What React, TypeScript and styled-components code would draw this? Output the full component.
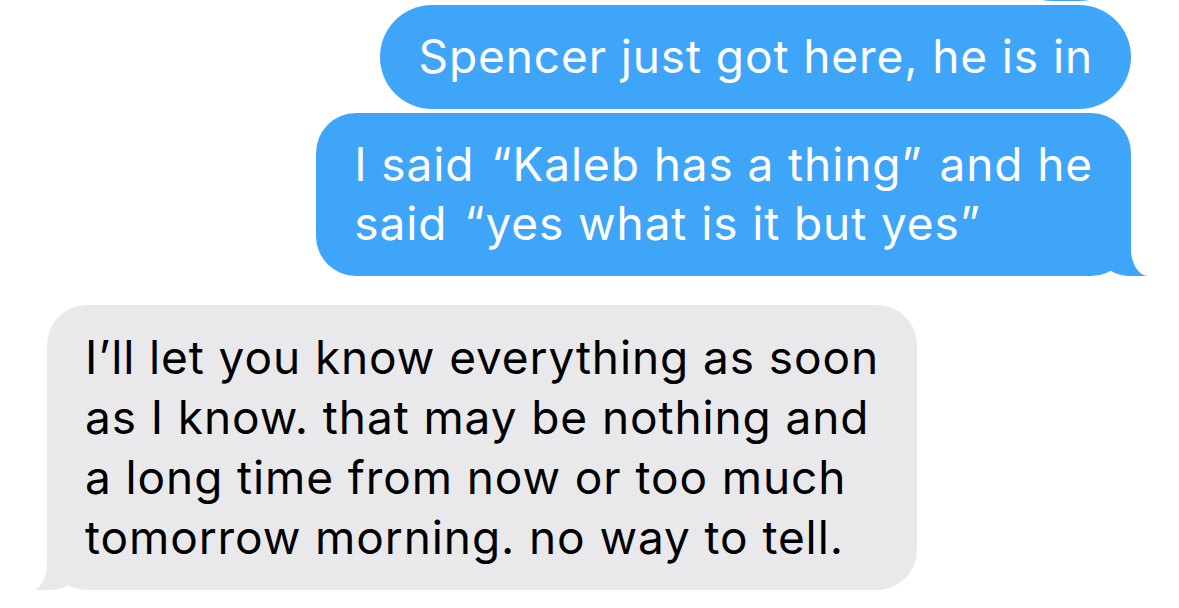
import styled, { createGlobalStyle } from 'styled-components'

const GlobalStyle = createGlobalStyle`
    html, body {
        margin: 0;
        padding: 0;
        background: #fff;
        overflow: hidden;
    }
`

const colors = {
    blue: '#3ea5f9',
    gray: '#e9e9eb',
    white: '#ffffff',
    ink: '#000000',
}

type Side = 'me' | 'them'

const Thread = styled.div`
    display: flex;
    flex-direction: column;
    gap: 4px;
    padding: 0 48px 0 47px;
    margin-top: -103px;
    font-family: Inter, 'Liberation Sans', sans-serif;
`

const Row = styled.div<{ $side: Side; $spaced?: boolean }>`
    display: flex;
    justify-content: ${(p) => (p.$side === 'me' ? 'flex-end' : 'flex-start')};
    margin-top: ${(p) => (p.$spaced ? '25px' : '0')};
`

const Bubble = styled.div<{ $side: Side; $tail?: boolean; $single?: boolean }>`
    position: relative;
    padding: 22px 38px 23px;
    border-radius: ${(p) => (p.$single ? '52px' : '40px')};
    background: ${(p) => (p.$side === 'me' ? colors.blue : colors.gray)};
    color: ${(p) => (p.$side === 'me' ? colors.white : colors.ink)};
    font-size: 46px;
    line-height: ${(p) => (p.$side === 'me' ? '59px' : '60px')};
    letter-spacing: 0.9px;
    white-space: nowrap;

    ${(p) =>
        p.$tail &&
        `
        &::before {
            content: '';
            position: absolute;
            bottom: 0;
            ${p.$side === 'me' ? 'right: -17px;' : 'left: -15px;'}
            width: 47px;
            height: 42px;
            background: ${p.$side === 'me' ? colors.blue : colors.gray};
            ${p.$side === 'me'
                ? 'border-bottom-left-radius: 30px 20px;'
                : 'border-bottom-right-radius: 30px 20px;'}
        }
        &::after {
            content: '';
            position: absolute;
            bottom: 0;
            ${p.$side === 'me' ? 'right: -50px;' : 'left: -50px;'}
            width: 50px;
            height: 42px;
            background: ${colors.white};
            ${p.$side === 'me'
                ? 'border-bottom-left-radius: 17px 27px;'
                : 'border-bottom-right-radius: 15px 27px;'}
        }
    `}
`

// quotes in the original font sit a little wider than in Inter
const WideGap = styled.span`
    letter-spacing: 4px;
`

const Hidden = styled.span`
    visibility: hidden;
`

export default function App() {
    return (
        <>
            <GlobalStyle />
            <Thread>
                <Row $side='me'>
                    <Bubble $side='me' $single>
                        <Hidden>ok</Hidden>
                    </Bubble>
                </Row>
                <Row $side='me'>
                    <Bubble $side='me' $single>
                        Spencer just got here, he is in
                    </Bubble>
                </Row>
                <Row $side='me'>
                    <Bubble $side='me' $tail>
                        I said<WideGap> </WideGap>“Kaleb has a thing”<WideGap> </WideGap>and he
                        <br />
                        said<WideGap> </WideGap>“yes what is it but yes”
                    </Bubble>
                </Row>
                <Row $side='them' $spaced>
                    <Bubble $side='them' $tail>
                        I’ll let you know everything as soon
                        <br />
                        as I know. that may be nothing and
                        <br />
                        a long time from now or too much
                        <br />
                        tomorrow morning. no way to tell.
                    </Bubble>
                </Row>
            </Thread>
        </>
    )
}
